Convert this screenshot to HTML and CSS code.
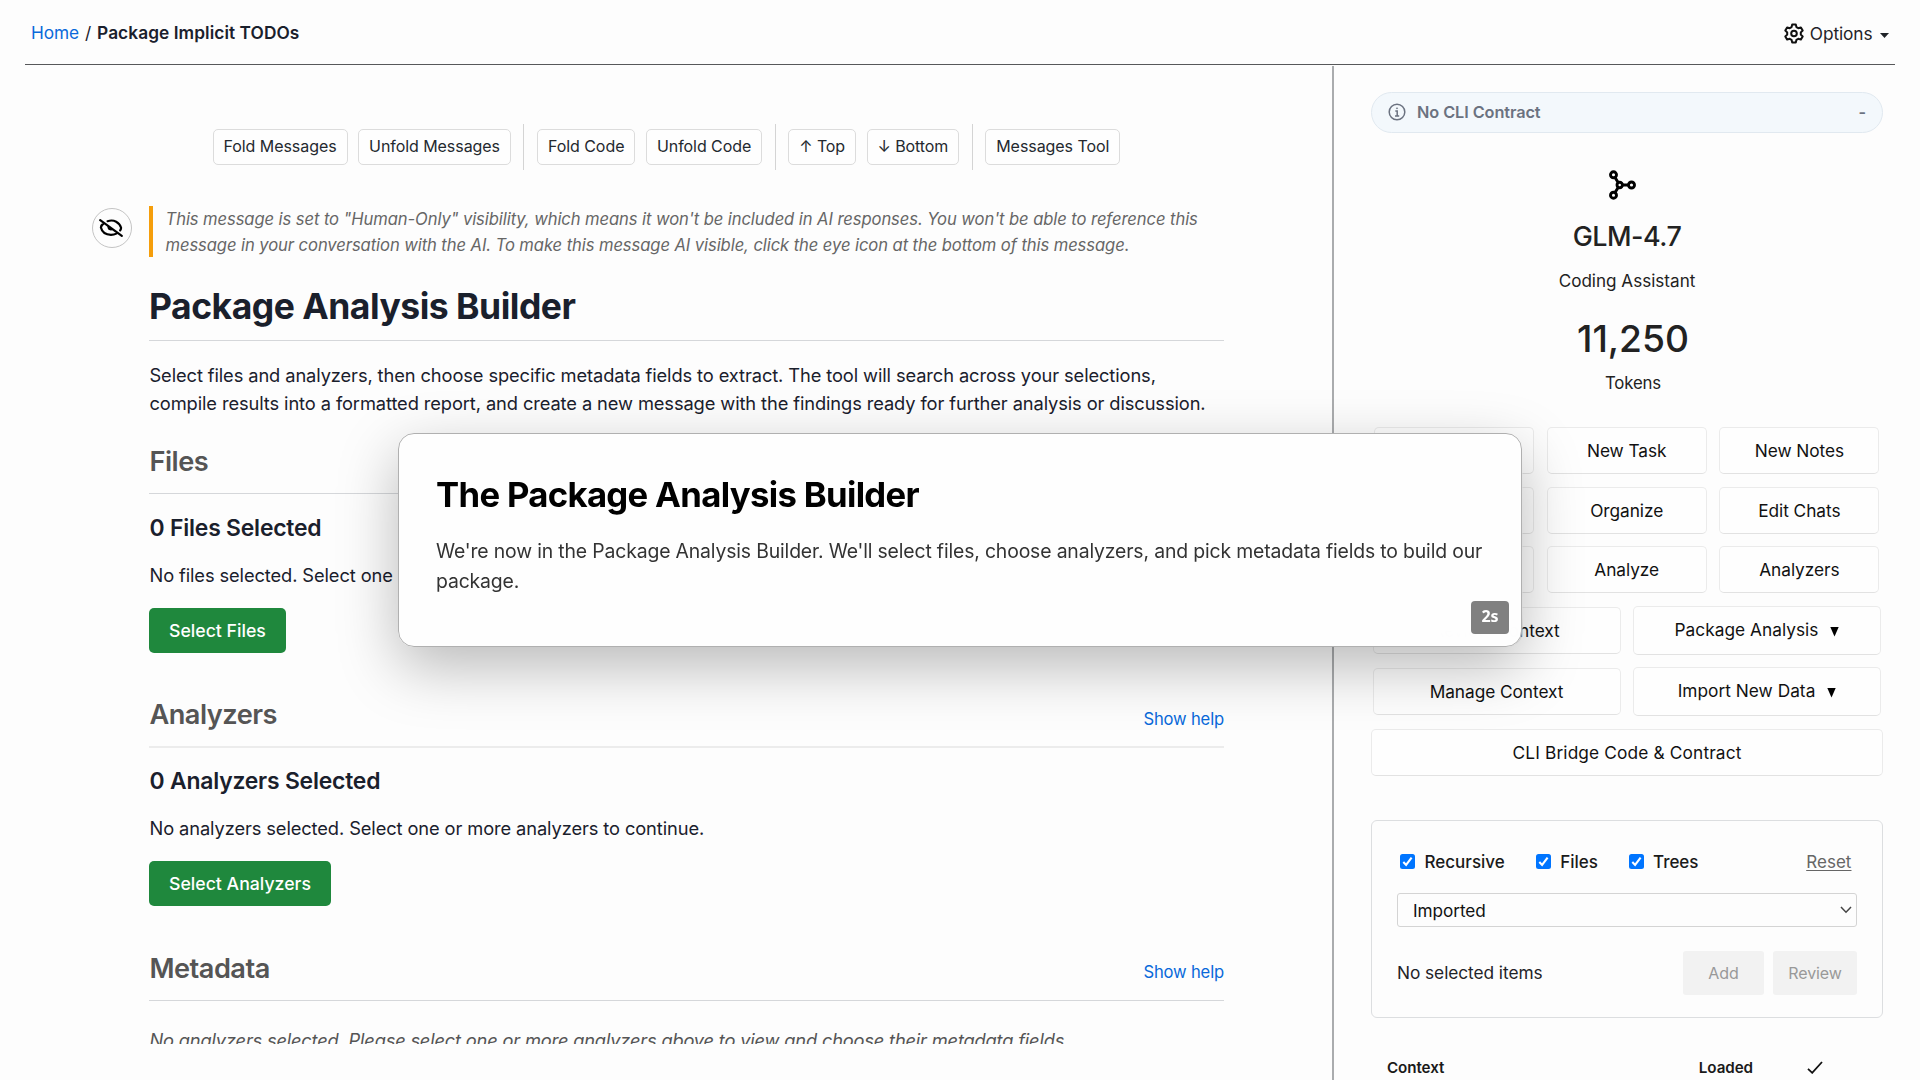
FILE: index.html
```html
<!DOCTYPE html>
<html lang="en">
<head>
<meta charset="utf-8">
<title>Package Implicit TODOs</title>
<link rel="stylesheet" href="styles.css">
</head>
<body>
<header class="topbar">
  <nav class="crumbs"><a class="home" href="#">Home</a><span class="slash">/</span><strong class="current">Package Implicit TODOs</strong></nav>
  <div class="options">
    <svg width="20" height="21" viewBox="0 0 20 21" fill="none" stroke="#111" stroke-width="2" stroke-linejoin="round"><path d="M8.2 1.5h3.6l.6 2.6 1.9 1.1 2.6-.8 1.8 3.1-1.9 1.900v2.200l1.900 1.900-1.800 3.100-2.600-.8-1.900 1.100-.6 2.600H8.200l-.6-2.600-1.900-1.100-2.600.8-1.800-3.100 1.900-1.900V9.400L1.300 7.500l1.800-3.100 2.600.8 1.900-1.100z"/><circle cx="10" cy="10.500" r="2.800"/></svg>
    <span>Options</span>
    <svg class="caret" width="9" height="5" viewBox="0 0 9 5"><path d="M0 0h9L4.500 5z" fill="#1f2328"/></svg>
  </div>
</header>
<div class="layout">
  <main class="chat">
    <div class="toolbar">
      <button class="tool">Fold Messages</button>
      <button class="tool">Unfold Messages</button>
      <span class="sep"></span>
      <button class="tool">Fold Code</button>
      <button class="tool">Unfold Code</button>
      <span class="sep"></span>
      <button class="tool arrow">↑ Top</button>
      <button class="tool arrow">↓ Bottom</button>
      <span class="sep"></span>
      <button class="tool">Messages Tool</button>
    </div>
    <div class="message">
      <div class="eye">
        <svg width="24" height="20" viewBox="0 0 24 20" fill="none" stroke="#000" stroke-width="2.200" stroke-linecap="round"><path d="M8.600 3.200C15 1 20.500 4.500 22 9.500c.200 1-.200 2-.800 2.900M5 5C3 6.500 2 8 1.900 9.600c1.200 5 5.400 7.200 10.100 7.200 1.900 0 3.800-.400 5.300-1.200M1.200 2.200l21.600 15.600"/><path d="M8.700 7.800c-.900 2.600.900 4.800 3.300 4.700 1 0 1.800-.300 2.400-.900z" fill="#000" stroke="none"/></svg>
      </div>
      <article class="body">
        <p class="note">This message is set to "Human-Only" visibility, which means it won't be included in AI responses. You won't be able to reference this<br>message in your conversation with the AI. To make this message AI visible, click the eye icon at the bottom of this message.</p>
        <h1 class="title">Package Analysis Builder</h1>
        <p class="text intro">Select files and analyzers, then choose specific metadata fields to extract. The tool will search across your selections,<br>compile results into a formatted report, and create a new message with the findings ready for further analysis or discussion.</p>
        <section class="section first">
          <div class="section-head"><h2>Files</h2></div>
          <h3 class="count">0 Files Selected</h3>
          <p class="text">No files selected. Select one</p>
          <button class="primary">Select Files</button>
        </section>
        <section class="section">
          <div class="section-head soft"><h2>Analyzers</h2><a class="help" href="#">Show help</a></div>
          <h3 class="count">0 Analyzers Selected</h3>
          <p class="text">No analyzers selected. Select one or more analyzers to continue.</p>
          <button class="primary">Select Analyzers</button>
        </section>
        <section class="section">
          <div class="section-head"><h2>Metadata</h2><a class="help" href="#">Show help</a></div>
          <p class="text empty">No analyzers selected. Please select one or more analyzers above to view and choose their metadata fields.</p>
        </section>
      </article>
    </div>
  </main>
  <aside class="side">
    <div class="contract">
      <svg width="18" height="18" viewBox="0 0 18 18" fill="none" stroke="#6b7280" stroke-width="1.500"><circle cx="9" cy="9" r="7.800"/><path d="M7.300 8H9.200v4.800M7 12.900h4.200"/><circle cx="9" cy="5.300" r=".6" fill="#6b7280" stroke-width=".6"/></svg>
      <span>No CLI Contract</span>
      <span class="dash">-</span>
    </div>
    <svg class="model-icon" width="30" height="32" viewBox="0 0 30 32" fill="none" stroke="#000" stroke-width="2.900"><circle cx="6.500" cy="5.800" r="3"/><circle cx="6.500" cy="26.200" r="3"/><circle cx="24.500" cy="16" r="3"/><circle cx="12.700" cy="16" r="2.700"/><path d="M8 8.400l3.200 5.200M8 23.600l3.200-5.200M15.500 16h6"/></svg>
    <div class="model">GLM-4.7</div>
    <div class="role">Coding Assistant</div>
    <div class="tokens">11,250</div>
    <div class="tokens-label">Tokens</div>
    <div class="grid3">
      <button class="btn"></button><button class="btn">New Task</button><button class="btn">New Notes</button>
      <button class="btn"></button><button class="btn">Organize</button><button class="btn">Edit Chats</button>
      <button class="btn"></button><button class="btn">Analyze</button><button class="btn">Analyzers</button>
    </div>
    <div class="grid2">
      <button class="btn">Review Context</button>
      <button class="btn drop">Package Analysis<svg width="9" height="10" viewBox="0 0 9 10"><path d="M.3 0h8.400L4.500 9.500z"/></svg></button>
      <button class="btn">Manage Context</button>
      <button class="btn drop">Import New Data<svg width="9" height="10" viewBox="0 0 9 10"><path d="M.3 0h8.400L4.500 9.500z"/></svg></button>
    </div>
    <button class="btn bridge">CLI Bridge Code &amp; Contract</button>
    <div class="panel">
      <div class="filters">
        <span class="check c1"><svg width="15" height="15" viewBox="0 0 15 15"><rect width="15" height="15" rx="2.500" fill="#0075ff"/><path d="M3.300 8l2.800 2.900L11.600 3.600" fill="none" stroke="#fff" stroke-width="2.100"/></svg>Recursive</span>
        <span class="check c2"><svg width="15" height="15" viewBox="0 0 15 15"><rect width="15" height="15" rx="2.500" fill="#0075ff"/><path d="M3.300 8l2.800 2.900L11.600 3.600" fill="none" stroke="#fff" stroke-width="2.100"/></svg>Files</span>
        <span class="check c3"><svg width="15" height="15" viewBox="0 0 15 15"><rect width="15" height="15" rx="2.500" fill="#0075ff"/><path d="M3.300 8l2.800 2.900L11.600 3.600" fill="none" stroke="#fff" stroke-width="2.100"/></svg>Trees</span>
        <a class="reset" href="#">Reset</a>
      </div>
      <div class="select"><span>Imported</span><svg width="12" height="8" viewBox="0 0 12 8" fill="none" stroke="#444" stroke-width="1.500"><path d="M1 1l5 5.200L11 1"/></svg></div>
      <div class="actions"><span class="none">No selected items</span><button class="off add">Add</button><button class="off review">Review</button></div>
    </div>
    <div class="ctx-head"><span>Context</span><span class="loaded">Loaded</span><svg width="16" height="13" viewBox="0 0 16 13" fill="none" stroke="#111" stroke-width="1.800"><path d="M1 7.800l4.200 4L15 1"/></svg></div>
  </aside>
</div>
<div class="modal">
  <h2 class="modal-title">The Package Analysis Builder</h2>
  <p class="modal-text">We're now in the Package Analysis Builder. We'll select files, choose analyzers, and pick metadata fields to build our<br>package.</p>
  <span class="timer">2s</span>
</div>
</body>
</html>
```
FILE: styles.css
```css
* { box-sizing: border-box; }
body {
  margin: 0;
  height: 1080px;
  overflow: hidden;
  position: relative;
  background: #fdfdfd;
  color: #1f2328;
  font-family: Inter, "Liberation Sans", sans-serif;
}
h1, h2, h3, p { margin: 0; font-weight: 600; }
p { font-weight: 400; white-space: nowrap; }
a { color: #0969da; text-decoration: none; }
button { font-family: inherit; white-space: nowrap; padding: 0; margin: 0; }
svg { flex: none; display: block; }

.topbar {
  margin: 0 25px;
  height: 65px;
  padding: 0 6px;
  border-bottom: 1px solid #57585a;
  display: flex;
  align-items: center;
  justify-content: space-between;
}
.crumbs { display: flex; padding-top: 1px; font-size: 17.300px; line-height: 24px; letter-spacing: -.12px; color: #1a202c; }
.slash { margin: 0 6px 0 6px; }
.current { font-weight: 600; letter-spacing: .07px; }
.options { display: flex; align-items: center; font-size: 17.300px; letter-spacing: -.1px; line-height: 24px; padding-top: 3px; }
.options svg:first-child { margin-right: 6px; }
.options span { margin: 1px 7.500px 0 0; }
.options .caret { margin-top: 3px; }

.layout { display: flex; margin: 0 25px; }
.chat { width: 1307px; height: 979px; padding-top: 59px; overflow: hidden; }
.toolbar { display: flex; align-items: center; gap: 10.500px; height: 46px; padding-left: 187.500px; }
.tool {
  height: 36px;
  padding: 0 10px 2px;
  border: 1px solid #dcdcdc;
  border-radius: 5px;
  background: #fefefe;
  color: #24292f;
  font-size: 16px;
  letter-spacing: -.06px;
}
.tool.arrow { letter-spacing: -.1px; }
.sep { width: 1px; height: 46px; margin: 0 2px; background: #d4d4d4; }

.message { display: flex; gap: 17.500px; margin-top: 36px; padding-left: 66.500px; }
.eye {
  flex: none;
  width: 40px; height: 40px;
  margin-top: 2px;
  border: 1px solid #c4c4c4;
  border-radius: 50%;
  display: flex; align-items: center; justify-content: center;
}
.eye svg { margin-right: 1px; }
.body { width: 1075px; flex: none; }
.note {
  padding: 1px 0 0 12.500px;
  height: 51px;
  border-left: 4px solid #f59e0b;
  font-size: 16.600px;
  font-style: italic;
  line-height: 25.500px;
  letter-spacing: -.08px;
  color: #666;
}
.title { margin-top: 28px; padding-bottom: 11px; border-bottom: 1px solid #d5d7da; font-size: 35.500px; font-weight: 650; line-height: 44px; letter-spacing: -.5px; color: #1a202c; }
.text { padding-left: .5px; font-size: 18.300px; line-height: 28px; letter-spacing: -.105px; color: #1a202c; }
.intro { margin-top: 20px; }
.section { margin-top: 44.300px; }
.section.first { margin-top: 27px; }
.section-head { display: flex; justify-content: space-between; align-items: baseline; height: 50px; padding-top: 1px; border-bottom: 1px solid #d5d7da; }
.section-head.soft { border-bottom: 2px solid #ececec; height: 51px; margin-bottom: -1px; }
.section-head h2 { padding-left: .5px; font-size: 27.200px; font-weight: 630; line-height: 34px; letter-spacing: -.52px; color: #555; }
.help { font-size: 16.600px; line-height: 24px; letter-spacing: -.16px; position: relative; top: .5px; }
.count { margin-top: 20px; padding-left: .5px; font-size: 22.900px; font-weight: 630; line-height: 28px; letter-spacing: -.2px; color: #1a202c; }
.count + .text { margin-top: 19px; }
.primary {
  display: block;
  height: 45px;
  margin-top: 19px;
  padding: 0 20px;
  border: 0;
  border-radius: 5px;
  background: #1f883d;
  color: #fff;
  font-size: 17.700px;
  font-weight: 520;
}
.empty { margin-top: 25.500px; font-style: italic; letter-spacing: -.19px; color: #555; }

.side { width: 563px; height: 1014px; margin-top: 1px; padding: 25.500px 12px 0 37px; border-left: 2px solid #aaacae; display: flex; flex-direction: column; }
.contract {
  display: flex; align-items: center;
  flex: none;
  height: 41px;
  padding: 0 16px;
  border: 1px solid #e1e9f0;
  border-radius: 21px;
  background: #f3f8fc;
  color: #6b7280;
  font-size: 16.300px;
  font-weight: 580;
  letter-spacing: -.08px;
}
.contract span { margin-left: 11px; }
.contract .dash { margin-left: auto; }
.model-icon { margin: 36.500px 0 0 236px; }
.model, .role, .tokens, .tokens-label { text-align: center; flex: none; color: #222; }
.model { margin-top: 18px; font-size: 26.900px; line-height: 34px; font-weight: 500; letter-spacing: -.5px; }
.role { margin-top: 15.500px; font-size: 17.100px; line-height: 24px; }
.tokens { margin: 24px 0 0 12px; font-size: 37.200px; line-height: 44px; font-weight: 500; }
.tokens-label { margin: 10px 0 0 12px; font-size: 16.800px; line-height: 24px; letter-spacing: -.17px; }
.btn {
  height: 47px;
  border: 1px solid #ebebeb;
  border-bottom-color: #e2e2e2;
  border-radius: 5px;
  background: #fefefe;
  color: #111;
  font-size: 17.300px;
  letter-spacing: -.06px;
}
.grid3 { display: grid; grid-template-columns: repeat(3, 160px); gap: 12.500px 12.700px; margin: 32.500px 0 0 3px; }
.grid2 { display: grid; grid-template-columns: 248px 248px; align-items: center; gap: 12.500px 12.500px; margin: 13px 0 0 1.500px; }
.drop { height: 48.500px; display: flex; align-items: center; justify-content: center; gap: 12px; padding-bottom: 1px; letter-spacing: .02px; }
.drop svg { margin-top: 5px; }
.bridge { flex: none; margin-top: 13.500px; letter-spacing: .14px; }
.panel { flex: none; height: 198px; margin-top: 44px; padding: 29px 25px 0; border: 1px solid #dcdee0; border-radius: 6px; }
.filters { display: flex; align-items: center; height: 24px; padding: 0 5.500px 0 3px; font-size: 17px; font-weight: 500; color: #1a1a1a; }
.check { display: flex; align-items: center; gap: 9.500px; }
.check svg { margin-bottom: 2px; }
.check.c2 { margin-left: 31px; }
.check.c3 { margin-left: 30.500px; }
.reset { margin-left: auto; color: #666; font-weight: 400; letter-spacing: .05px; text-decoration: underline; text-underline-offset: 2px; }
.select { display: flex; align-items: center; justify-content: space-between; height: 34px; margin-top: 19px; padding: 1px 4px 0 15px; border: 1px solid #d4d4d4; border-radius: 3px; color: #111; font-size: 17.200px; letter-spacing: -.06px; }
.select svg { margin-bottom: 1px; }
.actions { display: flex; align-items: center; gap: 9px; margin-top: 23.500px; }
.none { margin-right: auto; font-size: 17.300px; letter-spacing: -.06px; }
.off { height: 44px; border: 0; border-radius: 3px; background: #f2f2f2; color: #999; font-size: 16px; letter-spacing: -.1px; }
.add { width: 81px; }
.review { width: 84px; }
.ctx-head { display: flex; align-items: center; margin-top: 37.500px; padding: 0 60px 0 16px; font-size: 15.200px; font-weight: 600; line-height: 24px; letter-spacing: -.08px; color: #1a1a1a; }
.loaded { margin: 0 54px 0 auto; }

/* Walkthrough card floating above the page */
.modal {
  position: absolute;
  left: 397.500px; top: 433px;
  width: 1124.500px; height: 214px;
  padding: 39px 37.500px;
  border: 1px solid #b0b0b0;
  border-radius: 16px;
  background: rgba(254, 254, 254, .985);
  backdrop-filter: blur(8px);
  box-shadow: 0 20px 60px rgba(0, 0, 0, .27);
}
.modal-title { font-size: 34.700px; font-weight: 650; line-height: 42px; letter-spacing: -.68px; color: #000; }
.modal-text { margin-top: 21px; font-size: 19.400px; line-height: 30px; letter-spacing: -.155px; color: #333; }
.timer {
  position: absolute;
  right: 12px; bottom: 12px;
  width: 38px; height: 33px;
  border-radius: 4px;
  background: #808080;
  color: #fff;
  font: 700 16px/31px "Noto Sans", sans-serif;
  text-align: center;
}
```
